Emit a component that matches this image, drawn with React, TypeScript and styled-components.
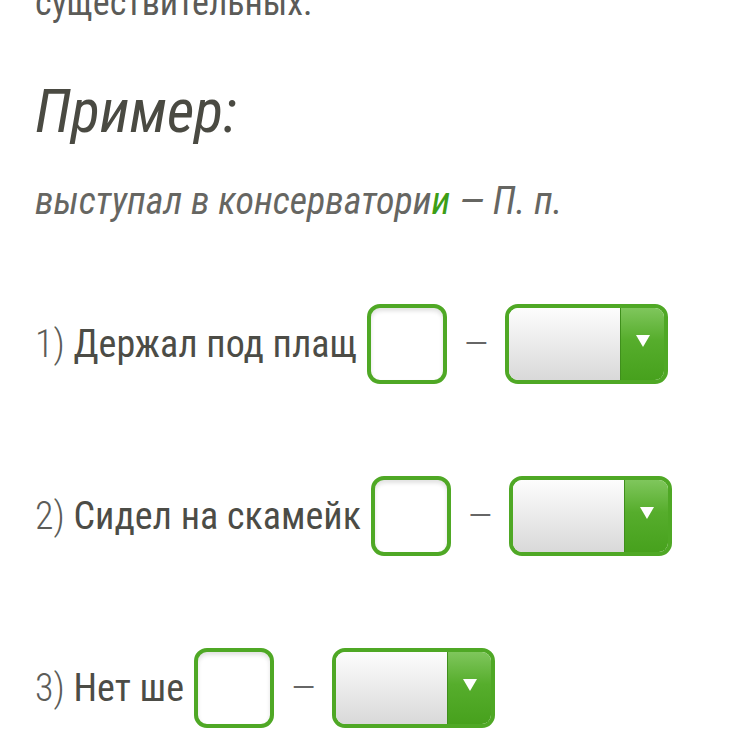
import React from "react";
import styled, { createGlobalStyle } from "styled-components";

const GlobalStyle = createGlobalStyle`
  html, body {
    margin: 0;
    padding: 0;
    background: #fff;
  }
  body {
    font-family: Roboto, "Liberation Sans", sans-serif;
    font-stretch: 80%;
    overflow: hidden;
  }
`;

const GREEN = "#4fa825";

type Task = { num: string; text: string; strong?: boolean };

const tasks: Task[] = [
  { num: "1)", text: "Держал под плащ", strong: true },
  { num: "2)", text: "Сидел на скамейк", strong: true },
  { num: "3)", text: "Нет ше" },
];

const App = () => {
  return (
    <>
      <GlobalStyle />
      <Page>
        <Intro>существительных.</Intro>
        <Heading>Пример:</Heading>
        <Example>
          выступал в консерватори<Ending>и</Ending> — П. п.
        </Example>
        <TaskList>
          {tasks.map((t) => (
            <TaskRow key={t.num}>
              <Label>
                <Num>{t.num}</Num> <Word strong={t.strong}>{t.text}</Word>
              </Label>
              <LetterBox type="text" />
              <Dash>—</Dash>
              <Select>
                <SelectField />
                <SelectButton>
                  <svg width="14" height="12" viewBox="0 0 14 12">
                    <path d="M0 0 H14 L7 12 Z" fill="#fff" />
                  </svg>
                </SelectButton>
              </Select>
            </TaskRow>
          ))}
        </TaskList>
      </Page>
    </>
  );
};

export default App;

const Page = styled.div`
  padding: 0 0 0 35px;
  height: 750px;
  overflow: hidden;
`;

const Intro = styled.p`
  margin: -17px 0 0;
  font-size: 36px;
  line-height: 40px;
  color: #5b5b58;
`;

const Heading = styled.h2`
  margin: 55px 0 0;
  font-size: 60px;
  line-height: 68px;
  font-style: italic;
  font-weight: 400;
  color: #4a4a42;
`;

const Example = styled.p`
  margin: 33px 0 0;
  font-size: 38px;
  line-height: 44px;
  font-style: italic;
  color: #666662;
`;

const Ending = styled.span`
  color: #3c9e16;
`;

const TaskList = styled.div`
  display: flex;
  flex-direction: column;
  gap: 92px;
  margin-top: 81px;
`;

const TaskRow = styled.div`
  display: flex;
  align-items: center;
  height: 80px;
`;

const Label = styled.span`
  font-size: 38px;
  margin-right: 10px;
  white-space: nowrap;
`;

const Num = styled.span`
  color: #5c5c58;
  font-weight: 300;
`;

const Word = styled.span<{ strong?: boolean }>`
  color: #4c4c46;
  font-weight: ${(p) => (p.strong ? 430 : 400)};
`;

const LetterBox = styled.input`
  box-sizing: border-box;
  width: 80px;
  height: 80px;
  border: 4px solid ${GREEN};
  border-radius: 13px;
  background: #fff;
  box-shadow: inset 0 3px 4px rgba(0, 0, 0, 0.12);
  outline: none;
  padding: 0;
`;

const Dash = styled.span`
  margin: 0 17px;
  font-size: 36px;
  color: #666;
  font-weight: 300;
`;

const Select = styled.div`
  box-sizing: border-box;
  display: flex;
  width: 163px;
  height: 80px;
  border: 4px solid ${GREEN};
  border-radius: 13px;
  overflow: hidden;
`;

const SelectField = styled.div`
  flex: 1;
  background: linear-gradient(to bottom, #fdfdfd 0%, #d9d9d9 100%);
  border-right: 1px solid #3f8f1c;
`;

const SelectButton = styled.div`
  width: 43px;
  display: flex;
  align-items: center;
  justify-content: center;
  padding-bottom: 6px;
  box-sizing: border-box;
  background: linear-gradient(to bottom, #7fc65c 0%, #56ad2c 45%, #47a11d 100%);
`;
